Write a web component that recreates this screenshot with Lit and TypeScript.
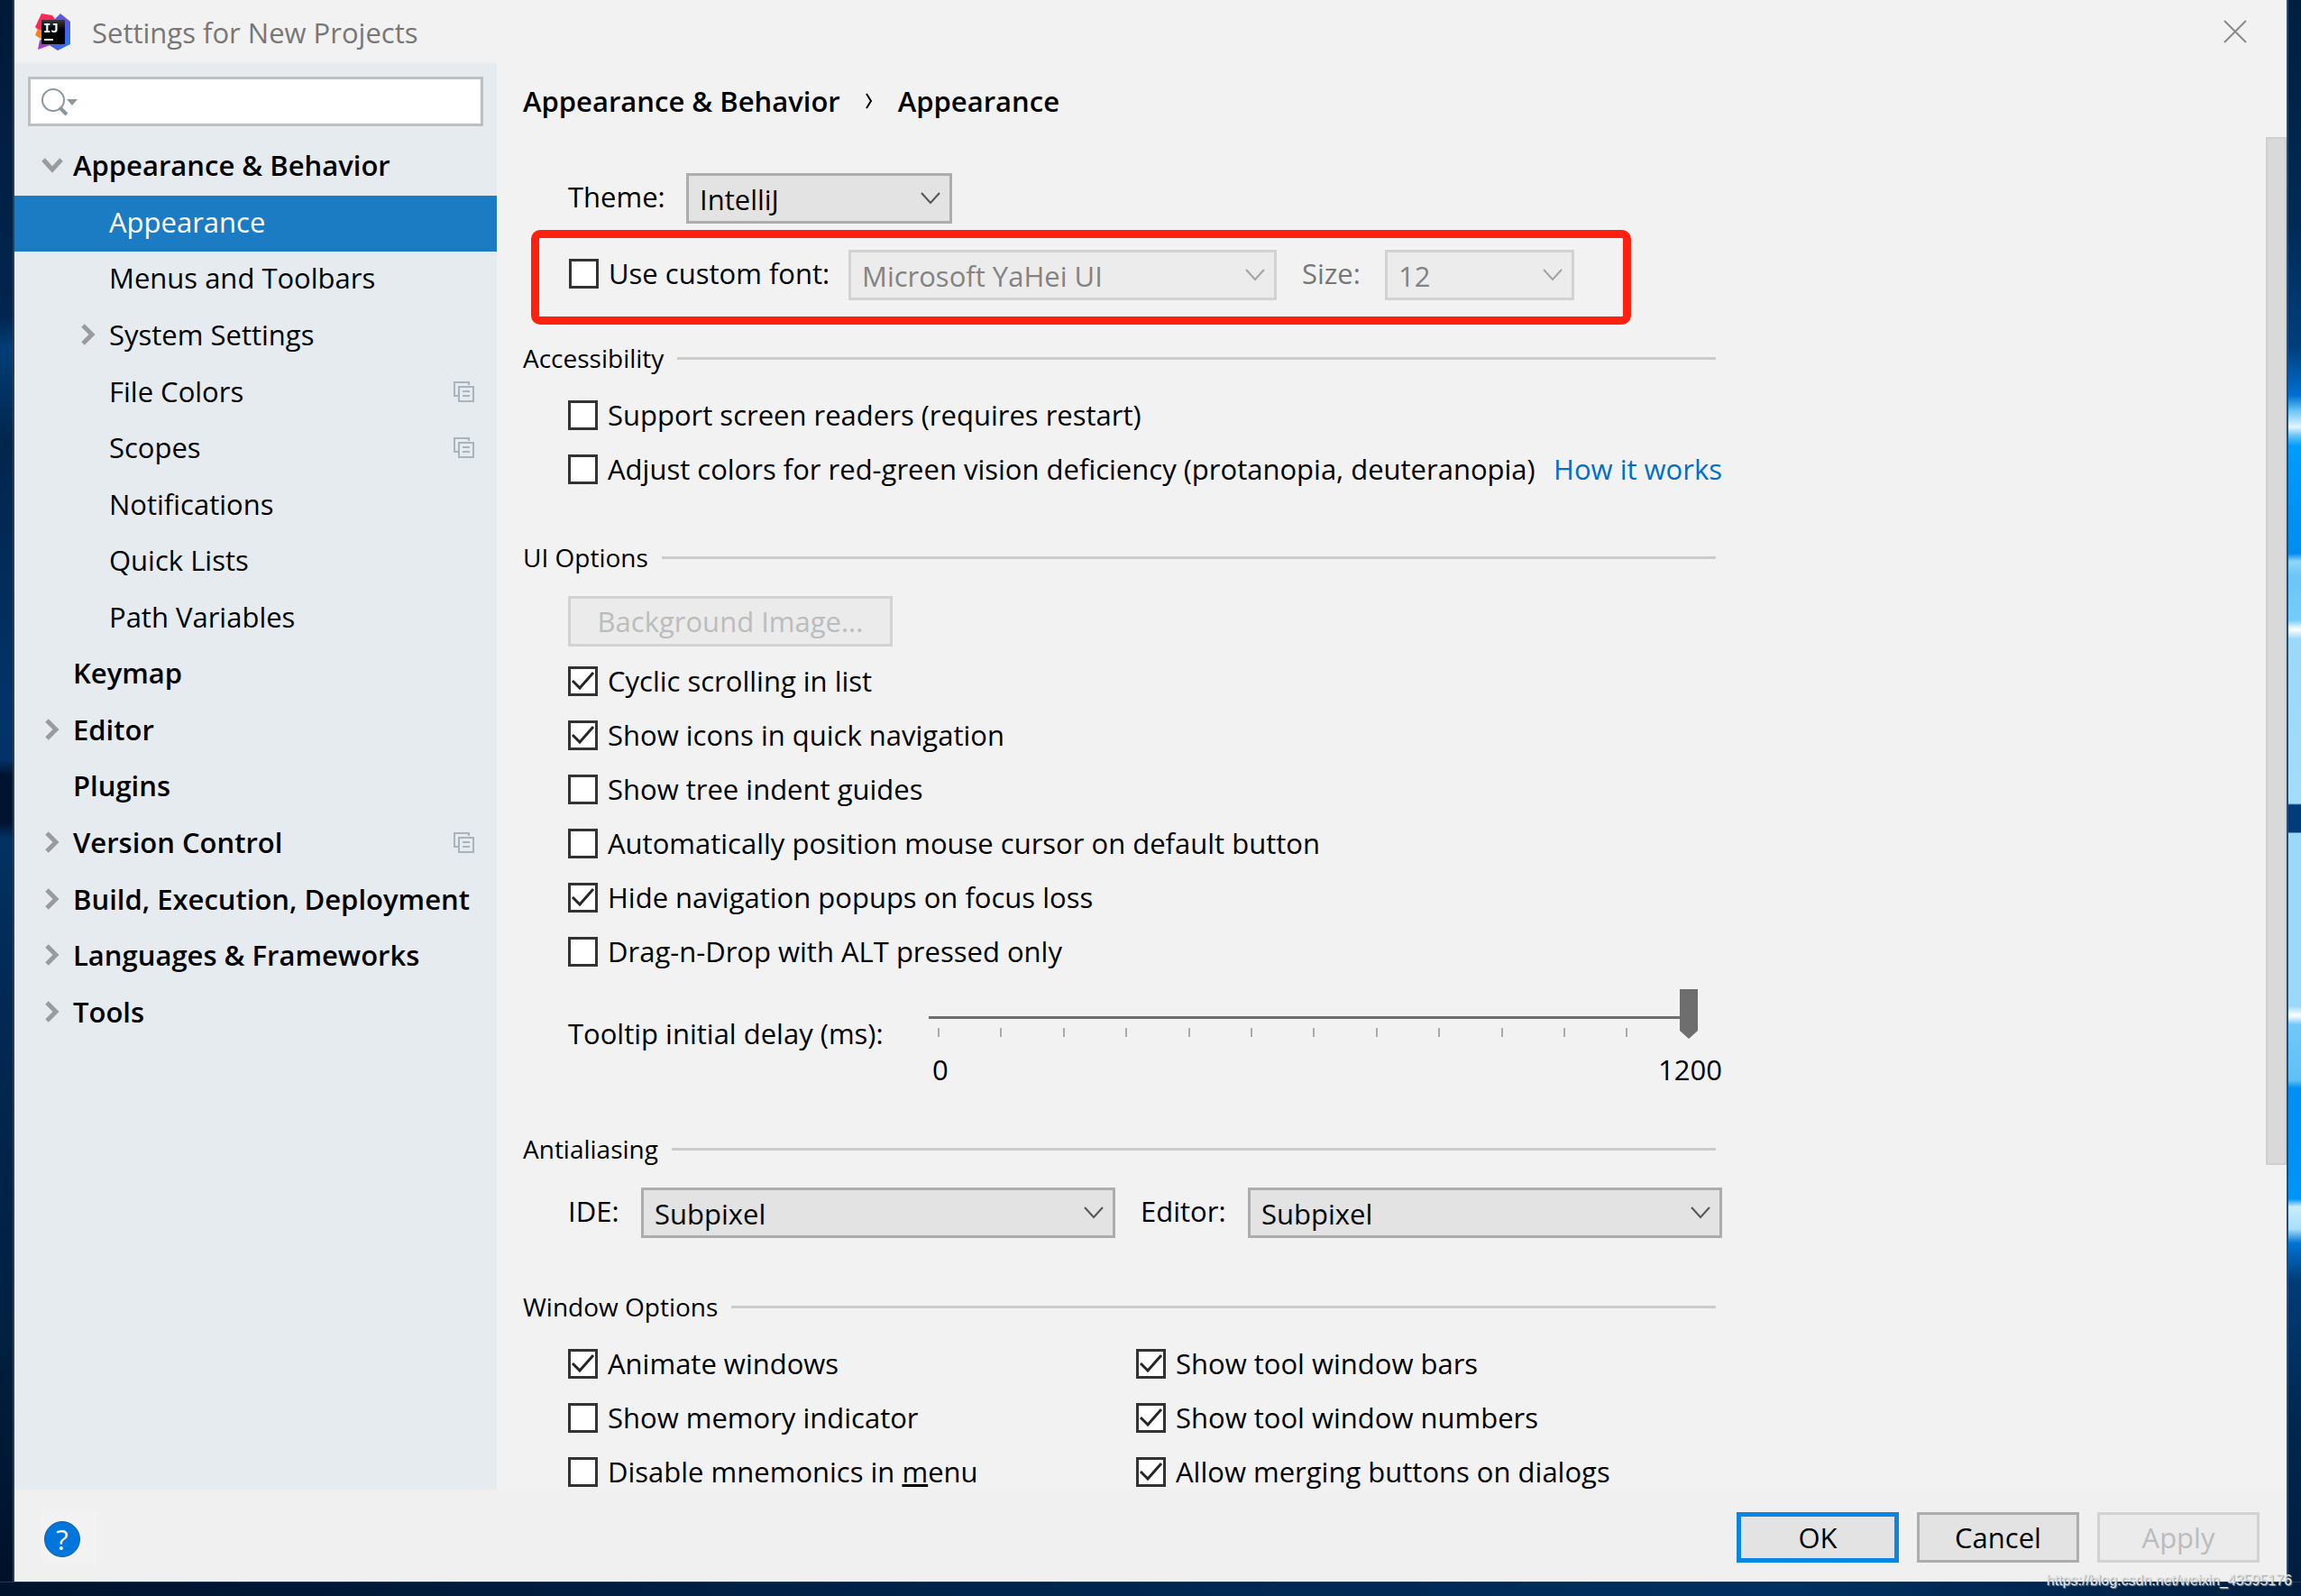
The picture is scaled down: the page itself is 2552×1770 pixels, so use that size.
import { LitElement, html, svg, css, nothing, type TemplateResult } from "lit";
import { customElement, property, state } from "lit/decorators.js";
import { classMap } from "lit/directives/class-map.js";

interface TreeNode {
  label: string;
  level: 0 | 1;
  arrow?: "open" | "closed";
  project?: boolean;
}

const TREE: TreeNode[] = [
  { label: "Appearance & Behavior", level: 0, arrow: "open" },
  { label: "Appearance", level: 1 },
  { label: "Menus and Toolbars", level: 1 },
  { label: "System Settings", level: 1, arrow: "closed" },
  { label: "File Colors", level: 1, project: true },
  { label: "Scopes", level: 1, project: true },
  { label: "Notifications", level: 1 },
  { label: "Quick Lists", level: 1 },
  { label: "Path Variables", level: 1 },
  { label: "Keymap", level: 0 },
  { label: "Editor", level: 0, arrow: "closed" },
  { label: "Plugins", level: 0 },
  { label: "Version Control", level: 0, arrow: "closed", project: true },
  { label: "Build, Execution, Deployment", level: 0, arrow: "closed" },
  { label: "Languages & Frameworks", level: 0, arrow: "closed" },
  { label: "Tools", level: 0, arrow: "closed" },
];

@customElement("ide-checkbox")
export class IdeCheckbox extends LitElement {
  @property({ type: Boolean }) checked = false;

  static styles = css`
    :host {
      display: block;
    }
    .row {
      display: grid;
      grid-template-columns: 33px auto;
      column-gap: 11px;
      align-items: center;
      width: max-content;
      line-height: 40px;
      white-space: nowrap;
    }
    .box,
    .mark {
      grid-area: 1 / 1;
      width: 33px;
      height: 33px;
    }
    .box {
      appearance: none;
      box-sizing: border-box;
      margin: 0;
      border: 3px solid #333;
      background: #fff;
    }
    .mark {
      pointer-events: none;
    }
  `;

  private onChange(e: Event) {
    this.checked = (e.target as HTMLInputElement).checked;
  }

  render() {
    return html`<label class="row">
      <input class="box" type="checkbox" .checked=${this.checked} @change=${this.onChange} />
      ${this.checked
        ? html`<svg class="mark" viewBox="0 0 33 33" fill="none" stroke="#262626" stroke-width="3">
            <path d="M5 16 L13 24 L28 7" />
          </svg>`
        : nothing}
      <span><slot></slot></span>
    </label>`;
  }
}

@customElement("ide-select")
export class IdeSelect extends LitElement {
  @property() name = "";
  @property({ type: Array }) options: string[] = [];
  @property({ type: Boolean, reflect: true }) disabled = false;

  static styles = css`
    :host {
      display: grid;
    }
    .field,
    .chevron {
      grid-area: 1 / 1;
    }
    .field {
      appearance: none;
      box-sizing: border-box;
      width: 100%;
      height: 56px;
      margin: 0;
      padding: 2px 60px 0 12px;
      border: 3px solid #adadad;
      border-radius: 0;
      background: #e3e3e3;
      color: #000;
      font: inherit;
      line-height: 48px;
      opacity: 1;
    }
    .chevron {
      width: 24px;
      height: 14px;
      place-self: center end;
      margin-right: 12px;
      color: #555;
      pointer-events: none;
    }
    :host([disabled]) .field {
      border-color: #d2d2d2;
      background: #ececec;
      color: #838383;
    }
    :host([disabled]) .chevron {
      color: #a3a3a3;
    }
  `;

  render() {
    return html`
      <select class="field" aria-label=${this.name} ?disabled=${this.disabled}>
        ${this.options.map((o) => html`<option>${o}</option>`)}
      </select>
      <svg class="chevron" viewBox="0 0 24 14" fill="none" stroke="currentColor" stroke-width="2">
        <path d="M2 1 L12 12 L22 1" />
      </svg>
    `;
  }
}

@customElement("app-root")
export class AppRoot extends LitElement {
  @state() private selected = "Appearance";

  static styles = css`
    :host {
      display: block;
      font-family: "Open Sans", "Noto Sans", sans-serif;
      font-size: 31px;
      line-height: 40px;
      color: #000;
    }
    .screen {
      position: relative;
    }
    .desktop {
      display: grid;
      grid-template-columns: 16px minmax(0, 1fr) 16px;
      grid-template-rows: minmax(0, 1fr) 16px;
      height: 100vh;
      overflow: hidden;
      background: #001c3b;
    }
    .wall-left {
      background: linear-gradient(
        #001a38 0,
        #00264f 20%,
        #003e78 22%,
        #00264c 28%,
        #00356a 46%,
        #003468 48%,
        #001430 49%,
        #001430 52%,
        #003262 53%,
        #002850 66%,
        #00203f 85%,
        #001129 100%
      );
      border-right: 2px solid #2c3e50;
    }
    .wall-right {
      border-left: 2px solid #2b4b68;
      background: linear-gradient(
        #001f3f 0,
        #002a55 14%,
        #003f7c 22%,
        #006fd4 25%,
        #6cc8f6 26%,
        #e4f5fd 27%,
        #5cc0f6 27.6%,
        #009cfc 28.2%,
        #008cf0 35%,
        #8fd6f8 35.5%,
        #6cc6f6 36.4%,
        #74ccf8 39.2%,
        #ffffff 39.8%,
        #9cd8f9 40.4%,
        #a4dcfa 50.8%,
        #003c7a 50.9%,
        #003c7a 52.6%,
        #9cd8f9 52.7%,
        #9cd8f9 63.6%,
        #ffffff 64.2%,
        #70c8f8 64.8%,
        #60c0f6 68.3%,
        #008ff5 68.8%,
        #0094f8 75.8%,
        #c8ecfc 76.3%,
        #a8dffa 77.7%,
        #0074d6 78.6%,
        #003c76 81%,
        #00274f 90%,
        #001d3e 100%
      );
    }
    .wall-bottom {
      grid-column: 1 / -1;
      border-top: 1px solid #203a55;
      background: linear-gradient(90deg, #00132c, #00234a 40%, #003060 78%, #001d3f);
    }
    .dialog {
      display: grid;
      grid-template-columns: 535px minmax(0, 1fr);
      grid-template-rows: 70px minmax(0, 1fr) 102px;
      background: #f2f2f2;
    }
    .titlebar {
      grid-column: 1 / -1;
      display: flex;
      align-items: center;
      gap: 23px;
      padding: 0 41px 0 23px;
      color: #777;
    }
    .logo {
      width: 40px;
      height: 41px;
    }
    .title {
      flex: 1;
      margin: 0;
      padding-top: 2px;
      font-size: inherit;
      font-weight: 400;
    }
    .close {
      display: grid;
      place-items: center;
      width: 32px;
      height: 32px;
      padding: 0;
      border: 0;
      background: none;
    }
    .close-icon {
      width: 26px;
      height: 26px;
    }

    .sidebar {
      padding: 15px 0;
      background: #e6ebef;
    }
    .search {
      display: flex;
      align-items: center;
      box-sizing: border-box;
      height: 55px;
      margin: 0 15px;
      padding-left: 12px;
      border: 3px solid #bdbfc1;
      background: #fff;
    }
    .search-icon {
      width: 42px;
      height: 32px;
    }
    .search-input {
      flex: 1;
      min-width: 0;
      border: 0;
      outline: 0;
      background: none;
      font: inherit;
    }
    .tree {
      display: grid;
      grid-auto-rows: 1fr;
      height: 1001px;
      margin: 14px 0 0;
      padding: 0;
      list-style: none;
    }
    .node {
      display: flex;
      align-items: center;
      box-sizing: border-box;
      width: 100%;
      height: 100%;
      padding: 0 25px 4px 30px;
      border: 0;
      background: none;
      color: inherit;
      font: inherit;
      font-weight: 600;
      text-align: left;
      white-space: nowrap;
    }
    .node.child {
      padding-left: 70px;
      font-weight: 400;
    }
    .node.selected {
      background: #1b7cc3;
      color: #fff;
    }
    .arrow {
      flex: none;
      width: 24px;
      height: 24px;
      margin-right: 11px;
    }
    .node-label {
      flex: 1;
      min-width: 0;
    }
    .project-icon {
      width: 24px;
      height: 24px;
    }

    .content {
      display: grid;
      grid-template-rows: 82px minmax(0, 1fr);
      min-width: 0;
    }
    .crumbs {
      display: flex;
      align-items: center;
      gap: 27px;
      padding: 2px 0 0 29px;
      font-weight: 600;
    }
    .crumb-icon {
      width: 10px;
      height: 18px;
    }
    .viewport {
      display: grid;
      grid-template-columns: minmax(0, 1fr) 23px;
      grid-template-rows: minmax(0, 1fr);
      overflow: hidden;
    }
    .scroll-thumb {
      box-sizing: border-box;
      height: 76%;
      border: 2px solid #cfcfcf;
      background: #d9d9d9;
    }
    .form {
      max-width: 1330px;
      padding: 40px 0 0 29px;
    }
    .indent {
      padding-left: 50px;
    }
    .line {
      display: flex;
      align-items: center;
    }
    .boxes {
      display: grid;
      row-gap: 20px;
      padding-bottom: 2px;
    }
    .boxes.columns {
      grid-template-columns: 630px 1fr;
    }
    .theme-label,
    .size-label,
    .aa-label,
    .font-check {
      padding-bottom: 4px;
    }
    .theme-label {
      width: 131px;
    }
    .theme-select {
      width: 295px;
    }
    .marked {
      display: flex;
      align-items: center;
      box-sizing: border-box;
      width: 1220px;
      margin: 7px 0 0 9px;
      padding: 13px 0 18px 33px;
      border: 9px solid #ff2010;
      border-radius: 10px;
    }
    .font-select {
      width: 475px;
      margin-left: auto;
    }
    .size-label {
      width: 92px;
      margin-left: 28px;
      color: #777;
    }
    .size-select {
      width: 210px;
      margin-right: 54px;
    }
    .heading {
      display: flex;
      align-items: center;
      gap: 15px;
      margin: 56px 7px 23px 0;
      font-size: 28px;
      font-weight: 400;
    }
    .heading.first {
      margin-top: 17px;
    }
    .heading::after {
      content: "";
      flex: 1;
      height: 3px;
      background: #cbcbcb;
    }
    .spread {
      display: flex;
      justify-content: space-between;
    }
    .link {
      color: #006fc8;
      text-decoration: none;
      white-space: nowrap;
    }
    .button {
      box-sizing: border-box;
      width: 180px;
      height: 56px;
      padding: 0;
      border: 3px solid #adadad;
      background: #e3e3e3;
      color: #000;
      font: inherit;
    }
    .button:disabled {
      border-color: #d2d2d2;
      background: #ebebeb;
      color: #bcbcbc;
    }
    .button.default {
      border: 5px solid #0a85e2;
    }
    .button.wide {
      display: block;
      width: 360px;
      margin-bottom: 18px;
    }
    .slider-row {
      display: flex;
      justify-content: space-between;
      align-items: center;
      margin-top: 20px;
    }
    .slider-label {
      padding-bottom: 4px;
    }
    .slider {
      display: grid;
      width: 880px;
    }
    .range,
    .ticks {
      grid-area: 1 / 1;
      width: 853px;
    }
    .range {
      appearance: none;
      height: 55px;
      margin: 0;
      background: linear-gradient(#6e6e6e, #6e6e6e) 0 30px / 100% 3px no-repeat;
    }
    .range::-webkit-slider-runnable-track {
      height: 55px;
    }
    .range::-webkit-slider-thumb {
      appearance: none;
      width: 20px;
      height: 55px;
      border: 0;
      border-radius: 0;
      background: #6e6e6e;
      clip-path: polygon(0 0, 100% 0, 100% 46px, 50% 100%, 0 46px);
    }
    .ticks {
      align-self: end;
      display: flex;
      justify-content: space-between;
      box-sizing: border-box;
      height: 12px;
      padding: 0 8px 2px 10px;
      pointer-events: none;
    }
    .tick {
      width: 2px;
      background: #ababab;
    }
    .scale {
      display: flex;
      justify-content: space-between;
      margin: 22px 0 0 4px;
      line-height: 24px;
    }
    .aa {
      display: grid;
      grid-template-columns: 81px 1fr 147px 1fr;
      align-items: center;
    }
    .aa-editor {
      padding-left: 28px;
    }

    .footer {
      grid-column: 1 / -1;
      display: flex;
      align-items: center;
      gap: 20px;
      padding: 4px 30px 0 30px;
      background: #f0f0f0;
    }
    .help {
      display: grid;
      place-items: center start;
      box-sizing: border-box;
      width: 61px;
      height: 60px;
      margin-right: auto;
      padding: 4px 0 0 3px;
      border: 0;
      background: #f2f2f2;
      font: inherit;
    }
    .help-disc {
      box-sizing: border-box;
      width: 40px;
      height: 40px;
      border: 1px solid #1a5fa0;
      border-radius: 50%;
      background: #0075dc;
      color: #fff;
      font-size: 31px;
      line-height: 38px;
      text-align: center;
    }
    .watermark {
      position: absolute;
      right: 10px;
      bottom: 8px;
      color: #e4e6e8;
      font-family: "Liberation Sans", Arial, sans-serif;
      font-size: 16px;
      line-height: 18px;
      text-shadow: 1px 1px 1px #8f9499;
    }
  `;

  private logo() {
    return html`<svg class="logo" viewBox="0 0 40 41" aria-hidden="true">
      <defs>
        <linearGradient id="lb" x1="0" y1="0" x2="1" y2="1">
          <stop offset="0" stop-color="#2f74f0" />
          <stop offset="0.45" stop-color="#6a4fd8" />
          <stop offset="0.7" stop-color="#3f66ee" />
          <stop offset="1" stop-color="#1f86f5" />
        </linearGradient>
        <linearGradient id="lk" x1="0" y1="0" x2="0" y2="1">
          <stop offset="0" stop-color="#3c3c3c" />
          <stop offset="0.4" stop-color="#000" />
        </linearGradient>
      </defs>
      <path d="M20 8 L28 0 L39 9 V34 L25 41 L14 34 Z" fill="url(#lb)" />
      <path d="M7 0 L19 2 L24 9 L12 20 L3 18 L0 15 Z" fill="#fe2857" />
      <path d="M3 17 L9 19 L8 29 L0 24 Z" fill="#fc801d" />
      <path d="M5 30 L10 26 L19 34 L3 40 Z" fill="#a33bd0" />
      <rect x="7" y="7" width="26" height="27" fill="url(#lk)" />
      <text x="9" y="21" fill="#fff" font-family="DejaVu Sans Mono, monospace" font-weight="700" font-size="14">IJ</text>
      <rect x="10" y="28" width="10" height="2" fill="#fff" />
    </svg>`;
  }

  private arrow(kind?: "open" | "closed"): TemplateResult {
    const shape =
      kind === "open"
        ? svg`<path d="M2 6 L12 17 L22 6" />`
        : kind === "closed"
          ? svg`<path d="M6 2 L16 12 L6 22" />`
          : nothing;
    return html`<svg class="arrow" viewBox="0 0 24 24" fill="none" stroke="#999b9d" stroke-width="5" aria-hidden="true">
      ${shape}
    </svg>`;
  }

  private node(n: TreeNode) {
    const cls = classMap({ node: true, child: n.level === 1, selected: n.label === this.selected });
    return html`<li>
      <button class=${cls} @click=${() => (this.selected = n.label)}>
        ${this.arrow(n.arrow)}
        <span class="node-label">${n.label}</span>
        ${n.project
          ? html`<svg class="project-icon" viewBox="0 0 24 24" fill="none" stroke="#a9b5bd" stroke-width="2" aria-hidden="true">
              <path d="M6 17 H2 V2 H18 V5" />
              <path d="M7 7 H23 V23 H7 Z" />
              <path d="M11 12 H19 M11 17 H19" />
            </svg>`
          : nothing}
      </button>
    </li>`;
  }

  render() {
    return html`<div class="screen">
      <div class="desktop">
        <div class="wall-left"></div>
        <div class="dialog" role="dialog" aria-labelledby="title">
          <header class="titlebar">
            ${this.logo()}
            <h1 class="title" id="title">Settings for New Projects</h1>
            <button class="close" aria-label="Close">
              <svg class="close-icon" viewBox="0 0 26 26" stroke="#8a8a8a" stroke-width="2">
                <path d="M1 1 L25 25 M25 1 L1 25" />
              </svg>
            </button>
          </header>

          <nav class="sidebar">
            <label class="search">
              <svg class="search-icon" viewBox="0 0 42 32" fill="none" stroke="#8c98a0" aria-hidden="true">
                <circle cx="13" cy="14" r="12" stroke-width="2" />
                <path d="M20 22 L28 30" stroke-width="4" />
                <path d="M28 13 H40 L34 20 Z" fill="#8c98a0" stroke="none" />
              </svg>
              <input class="search-input" type="text" aria-label="Search settings" />
            </label>
            <ul class="tree">
              ${TREE.map((n) => this.node(n))}
            </ul>
          </nav>

          <main class="content">
            <div class="crumbs">
              <span>Appearance &amp; Behavior</span>
              <svg class="crumb-icon" viewBox="0 0 10 18" fill="none" stroke="#000" stroke-width="2" aria-hidden="true">
                <path d="M2 1 L7 9 L2 17" />
              </svg>
              <span>Appearance</span>
            </div>
            <div class="viewport">
              <div class="form">
                <div class="line indent">
                  <span class="theme-label">Theme:</span>
                  <ide-select class="theme-select" name="Theme" .options=${["IntelliJ"]}></ide-select>
                </div>
                <div class="marked">
                  <ide-checkbox class="font-check">Use custom font:</ide-checkbox>
                  <ide-select class="font-select" name="Font" disabled .options=${["Microsoft YaHei UI"]}></ide-select>
                  <span class="size-label">Size:</span>
                  <ide-select class="size-select" name="Size" disabled .options=${["12"]}></ide-select>
                </div>

                <h2 class="heading first">Accessibility</h2>
                <div class="boxes indent">
                  <ide-checkbox>Support screen readers (requires restart)</ide-checkbox>
                  <div class="spread">
                    <ide-checkbox>Adjust colors for red-green vision deficiency (protanopia, deuteranopia)</ide-checkbox>
                    <a class="link" href="#how">How it works</a>
                  </div>
                </div>

                <h2 class="heading">UI Options</h2>
                <div class="indent">
                  <button class="button wide" disabled>Background Image...</button>
                  <div class="boxes">
                    <ide-checkbox checked>Cyclic scrolling in list</ide-checkbox>
                    <ide-checkbox checked>Show icons in quick navigation</ide-checkbox>
                    <ide-checkbox>Show tree indent guides</ide-checkbox>
                    <ide-checkbox>Automatically position mouse cursor on default button</ide-checkbox>
                    <ide-checkbox checked>Hide navigation popups on focus loss</ide-checkbox>
                    <ide-checkbox>Drag-n-Drop with ALT pressed only</ide-checkbox>
                  </div>
                  <div class="slider-row">
                    <label class="slider-label" for="delay">Tooltip initial delay (ms):</label>
                    <div>
                      <div class="slider">
                        <input class="range" id="delay" type="range" min="0" max="1200" step="100" value="1200" />
                        <div class="ticks">
                          ${Array.from({ length: 13 }, () => html`<span class="tick"></span>`)}
                        </div>
                      </div>
                      <div class="scale"><span>0</span><span>1200</span></div>
                    </div>
                  </div>
                </div>

                <h2 class="heading">Antialiasing</h2>
                <div class="aa indent">
                  <span class="aa-label">IDE:</span>
                  <ide-select name="IDE antialiasing" .options=${["Subpixel"]}></ide-select>
                  <span class="aa-label aa-editor">Editor:</span>
                  <ide-select name="Editor antialiasing" .options=${["Subpixel"]}></ide-select>
                </div>

                <h2 class="heading">Window Options</h2>
                <div class="boxes columns indent">
                  <ide-checkbox checked>Animate windows</ide-checkbox>
                  <ide-checkbox checked>Show tool window bars</ide-checkbox>
                  <ide-checkbox>Show memory indicator</ide-checkbox>
                  <ide-checkbox checked>Show tool window numbers</ide-checkbox>
                  <ide-checkbox>Disable mnemonics in <u>m</u>enu</ide-checkbox>
                  <ide-checkbox checked>Allow merging buttons on dialogs</ide-checkbox>
                </div>
              </div>
              <div class="scroll-thumb"></div>
            </div>
          </main>

          <footer class="footer">
            <button class="help" aria-label="Help"><span class="help-disc">?</span></button>
            <button class="button default">OK</button>
            <button class="button">Cancel</button>
            <button class="button" disabled>Apply</button>
          </footer>
        </div>
        <div class="wall-right"></div>
        <div class="wall-bottom"></div>
      </div>
      <div class="watermark">https://blog.csdn.net/weixin_43595176</div>
    </div>`;
  }
}
